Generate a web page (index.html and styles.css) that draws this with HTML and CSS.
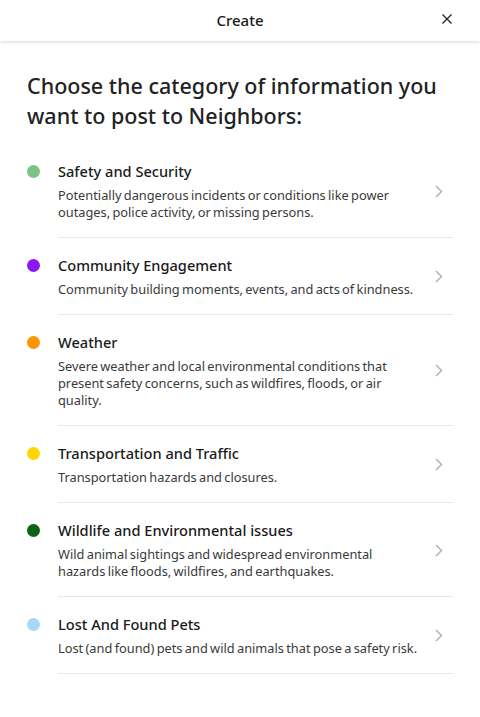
FILE: index.html
```html
<!DOCTYPE html>
<html>
<head>
<meta charset="utf-8">
<link rel="stylesheet" href="styles.css">
</head>
<body>
<header class="topbar">
  <span class="topbar-title">Create</span>
  <button class="close" aria-label="Close">
    <svg width="10" height="10" viewBox="0 0 10 10"><path d="M0.5 0.5L9.5 9.5M9.5 0.5L0.5 9.5" stroke="#222" stroke-width="1.3" fill="none"/></svg>
  </button>
</header>
<main class="content">
  <h1 class="heading">Choose the category of information you want to post to Neighbors:</h1>
  <ul class="list">
    <li class="item">
      <span class="dot dot-green"></span>
      <div class="body">
        <div class="text">
          <div class="name">Safety and Security</div>
          <div class="desc">Potentially dangerous incidents or conditions like power outages, police activity, or missing persons.</div>
        </div>
        <svg class="chev" width="8" height="13" viewBox="0 0 8 13"><path d="M1 1l5.5 5.5L1 12" stroke="#b3b3b3" stroke-width="1.5" fill="none"/></svg>
      </div>
    </li>
    <li class="item">
      <span class="dot dot-purple"></span>
      <div class="body">
        <div class="text">
          <div class="name">Community Engagement</div>
          <div class="desc">Community building moments, events, and acts of kindness.</div>
        </div>
        <svg class="chev" width="8" height="13" viewBox="0 0 8 13"><path d="M1 1l5.5 5.5L1 12" stroke="#b3b3b3" stroke-width="1.5" fill="none"/></svg>
      </div>
    </li>
    <li class="item">
      <span class="dot dot-orange"></span>
      <div class="body">
        <div class="text">
          <div class="name">Weather</div>
          <div class="desc">Severe weather and local environmental conditions that present safety concerns, such as wildfires, floods, or air quality.</div>
        </div>
        <svg class="chev" width="8" height="13" viewBox="0 0 8 13"><path d="M1 1l5.5 5.5L1 12" stroke="#b3b3b3" stroke-width="1.5" fill="none"/></svg>
      </div>
    </li>
    <li class="item">
      <span class="dot dot-yellow"></span>
      <div class="body">
        <div class="text">
          <div class="name">Transportation and Traffic</div>
          <div class="desc">Transportation hazards and closures.</div>
        </div>
        <svg class="chev" width="8" height="13" viewBox="0 0 8 13"><path d="M1 1l5.5 5.5L1 12" stroke="#b3b3b3" stroke-width="1.5" fill="none"/></svg>
      </div>
    </li>
    <li class="item">
      <span class="dot dot-darkgreen"></span>
      <div class="body">
        <div class="text">
          <div class="name">Wildlife and Environmental issues</div>
          <div class="desc">Wild animal sightings and widespread environmental hazards like floods, wildfires, and earthquakes.</div>
        </div>
        <svg class="chev" width="8" height="13" viewBox="0 0 8 13"><path d="M1 1l5.5 5.5L1 12" stroke="#b3b3b3" stroke-width="1.5" fill="none"/></svg>
      </div>
    </li>
    <li class="item">
      <span class="dot dot-blue"></span>
      <div class="body">
        <div class="text">
          <div class="name">Lost And Found Pets</div>
          <div class="desc">Lost (and found) pets and wild animals that pose a safety risk.</div>
        </div>
        <svg class="chev" width="8" height="13" viewBox="0 0 8 13"><path d="M1 1l5.5 5.5L1 12" stroke="#b3b3b3" stroke-width="1.5" fill="none"/></svg>
      </div>
    </li>
  </ul>
</main>
</body>
</html>
```
FILE: styles.css
```css
* { box-sizing: border-box; }
html, body { margin: 0; padding: 0; background: #fff; }
body {
  font-family: "Noto Sans", "Open Sans", sans-serif;
  color: #1f1f1f;
  width: 480px;
}
.topbar {
  position: relative;
  height: 41px;
  display: flex;
  align-items: center;
  justify-content: center;
  background: #fff;
  box-shadow: 0 1px 4px rgba(0,0,0,0.16);
  z-index: 1;
}
.topbar-title {
  font-size: 15px;
  line-height: 20px;
  margin-top: -2px;
  font-weight: 500;
  color: #1a1a1a;
}
.close {
  position: absolute;
  right: 28px;
  top: 14px;
  width: 10px;
  height: 10px;
  padding: 0;
  border: 0;
  background: none;
  display: flex;
}
.content {
  padding: 30px 27px 0 27px;
}
.heading {
  margin: 0 0 13px 0;
  font-size: 21.5px;
  line-height: 30px;
  font-weight: 500;
  color: #222;
}
.list {
  list-style: none;
  margin: 0;
  padding: 0;
}
.item {
  display: flex;
  align-items: flex-start;
}
.dot {
  flex: none;
  width: 13px;
  height: 13px;
  border-radius: 50%;
  margin-top: 21px;
  margin-right: 18px;
}
.dot-green { background: #7dc383; }
.dot-purple { background: #8c1af0; }
.dot-orange { background: #ff9500; }
.dot-yellow { background: #ffd600; }
.dot-darkgreen { background: #0b6314; }
.dot-blue { background: #a8d8f5; }
.body {
  flex: 1;
  display: flex;
  align-items: center;
  padding: 17px 0 16px 0;
  border-bottom: 1px solid #e8e8e8;
}
.text { flex: 1; padding-right: 14.5px; }
.name {
  font-size: 14.6px;
  line-height: 20px;
  font-weight: 500;
  color: #1a1a1a;
  margin-bottom: 6px;
}
.desc {
  font-size: 12.8px;
  line-height: 17px;
  word-spacing: -1px;
  color: #3a3a3a;
}
.chev { flex: none; margin-right: 10px; }
```
